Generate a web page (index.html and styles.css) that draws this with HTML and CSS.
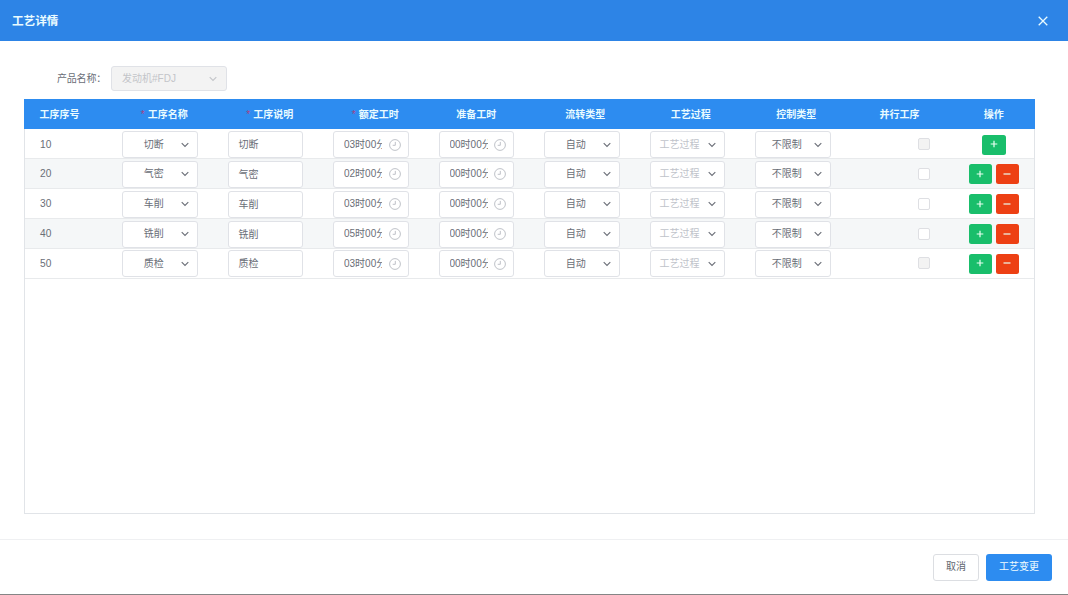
FILE: index.html
```html
<!DOCTYPE html>
<html lang="zh-CN">
<head>
<meta charset="utf-8">
<title>工艺详情</title>
<link rel="stylesheet" href="styles.css">
</head>
<body>
<svg class="defs" aria-hidden="true">
  <symbol id="chevron" viewBox="0 0 8 6"><path d="M.7 1.1 4 4.4 7.3 1.1"/></symbol>
  <symbol id="clock" viewBox="0 0 12 12"><circle cx="6" cy="6" r="5.4"/><path d="M6.3 2.9v3.4H3.7"/></symbol>
  <symbol id="plus" viewBox="0 0 8 8"><path d="M4 .7v6.6M.7 4h6.6"/></symbol>
  <symbol id="minus" viewBox="0 0 8 8"><path d="M.5 4h7"/></symbol>
</svg>
<div class="modal">
  <header class="modal-header">
    <h1>工艺详情</h1>
    <svg class="close" viewBox="0 0 10 10"><path d="M.7.7 9.3 9.3M9.3.7.7 9.3"/></svg>
  </header>
  <main class="modal-body">
    <div class="product">
      <label>产品名称：</label>
      <div class="field product-select"><span>发动机#FDJ</span><svg class="chevron"><use href="#chevron"/></svg></div>
    </div>
    <section class="table">
      <div class="row head">
        <div class="first">工序序号</div>
        <div class="required"><i>*</i>工序名称</div>
        <div class="required"><i>*</i>工序说明</div>
        <div class="required"><i>*</i>额定工时</div>
        <div>准备工时</div>
        <div class="wide">流转类型</div>
        <div class="wide">工艺过程</div>
        <div class="wide">控制类型</div>
        <div>并行工序</div>
        <div>操作</div>
      </div>
      <div id="rows"></div>
    </section>
  </main>
  <footer class="modal-footer">
    <button class="cancel">取消</button>
    <button class="primary">工艺变更</button>
  </footer>
</div>
<script src="script.js"></script>
</body>
</html>
```
FILE: styles.css
```css
* { box-sizing: border-box; }
body {
  margin: 0;
  background: #fff;
  color: #6a6e77;
  font: 10px/14px "Liberation Sans", "Noto Sans CJK SC", sans-serif;
}
svg { fill: none; stroke: currentColor; flex: none; }
.defs { display: none; }
.modal {
  height: 595px;
  display: flex;
  flex-direction: column;
  border-bottom: 1px solid #858585;
}
.modal-header {
  height: 41px;
  flex: none;
  padding: 0 20px 0 12px;
  display: flex;
  align-items: center;
  justify-content: space-between;
  background: #2d84e6;
  color: #e9fbff;
}
.modal-header h1 { margin: 0; font-size: 11.6px; line-height: 16px; font-weight: 700; }
.close { width: 10px; height: 10px; stroke-width: 1.3; }
.modal-body { flex: 1; padding: 25px 33px 0 24px; }
.product { display: flex; align-items: center; height: 25px; padding-left: 33px; }
.product label { width: 54px; font-size: 10px; letter-spacing: -.2px; white-space: nowrap; }
.field {
  height: 27px;
  border: 1px solid #e0e2e7;
  border-radius: 3px;
  background: #fff;
  display: flex;
  align-items: center;
  white-space: nowrap;
}
.product .product-select {
  width: 116px;
  height: 25px;
  padding: 0 9px 0 10px;
  justify-content: space-between;
  background: #f3f3f3;
  color: #c3c5c9;
}
.chevron { width: 8px; height: 6px; stroke-width: 1.1; }
.table {
  width: 1011px;
  height: 415px;
  margin-top: 8px;
  border: 1px solid #e1e4e8;
  border-top: 0;
}
.row {
  display: grid;
  grid-template-columns: 82px repeat(7, 105.5px) 108px 1fr;
  height: 29.8px;
  align-items: center;
  border-bottom: 1px solid #e8eaec;
}
.row > * { min-width: 0; padding: 0 15px; }
#rows { padding-top: .6px; }
#rows .row { padding-top: 1.4px; }
.row > .first { padding-left: 15px; text-align: left; }
.row .number { font-size: 10.2px; }
.row:nth-child(even) { background: #f5f7f8; }
.head {
  height: 30px;
  margin: 0 -1px;
  padding: 2px 1px 0;
  background: #2d8cf0;
  border: 0;
  color: #e9fbff;
  font-weight: 700;
  text-align: center;
}
.head > * { padding: 0; white-space: nowrap; }
.head > .required { padding-left: 9px; }
.row.head > .required { padding-left: 9px; }
.head > .wide { padding-left: 7px; }
.head > .first { padding-left: 14.5px; }
.head i {
  display: inline-block;
  width: 7px;
  color: #a64287;
  font-style: normal;
  font-weight: 400;
  text-align: left;
}
.select { justify-content: space-between; padding: 0 8px 0 9px; }
.select span { flex: 1; text-align: center; padding-right: 5px; }
.select.placeholder span { color: #c0c3ca; text-align: left; padding: 0; }
.input { padding: 1px 10px 0; }
.time { padding: 0 7px 0 10px; justify-content: space-between; }
.time span { width: 38px; overflow: hidden; }
.clock { width: 12px; height: 12px; stroke-width: .8; color: #afb3ba; }
.check { justify-self: center; padding: 0; }
.check span {
  display: block;
  width: 12px;
  height: 12px;
  margin: -1px 0 0 48px;
  border: 1px solid #dedfe3;
  border-radius: 2px;
  background: #fff;
}
.check .disabled { background: #f3f3f3; }
.row > .actions { padding: 0; display: flex; justify-content: center; gap: 3.5px; }
.actions button {
  width: 23.5px;
  height: 20px;
  padding: 0 0 1px;
  display: flex;
  align-items: center;
  justify-content: center;
  border: 0;
  border-radius: 2.5px;
  color: #e9fff2;
}
.actions svg { width: 8px; height: 8px; stroke-width: 1.2; }
.add { background: #19be6b; }
.remove { background: #ed4014; }
.modal-footer {
  height: 55px;
  flex: none;
  padding: 0 16px 0 0;
  border-top: 1px solid #eff0f2;
  display: flex;
  justify-content: flex-end;
  align-items: center;
  gap: 7px;
}
.modal-footer button {
  height: 27px;
  padding: 0;
  border-radius: 3px;
  font: inherit;
}
.cancel { width: 46px; border: 1px solid #dcdee2; background: #fff; color: #62666f; }
.primary { width: 66px; border: 0; background: #2d8cf0; color: #f0fcff; }
```
FILE: script.js
```js
const rows = [
  { no: 10, name: '切断', rated: '03时00分', locked: true },
  { no: 20, name: '气密', rated: '02时00分' },
  { no: 30, name: '车削', rated: '03时00分' },
  { no: 40, name: '铣削', rated: '05时00分' },
  { no: 50, name: '质检', rated: '03时00分', locked: true }
];

const icon = name => `<svg class="${name}"><use href="#${name}"/></svg>`;
const select = (text, kind = '') =>
  `<div><div class="field select ${kind}"><span>${text}</span>${icon('chevron')}</div></div>`;
const time = text =>
  `<div><div class="field time"><span>${text}</span>${icon('clock')}</div></div>`;

document.getElementById('rows').innerHTML = rows.map((row, index) => `
  <div class="row">
    <div class="first number">${row.no}</div>
    ${select(row.name)}
    <div><div class="field input">${row.name}</div></div>
    ${time(row.rated)}
    ${time('00时00分')}
    ${select('自动')}
    ${select('工艺过程', 'placeholder')}
    ${select('不限制')}
    <div class="check"><span class="${row.locked ? 'disabled' : ''}"></span></div>
    <div class="actions">
      <button class="add">${icon('plus')}</button>
      ${index ? `<button class="remove">${icon('minus')}</button>` : ''}
    </div>
  </div>`).join('');
```
